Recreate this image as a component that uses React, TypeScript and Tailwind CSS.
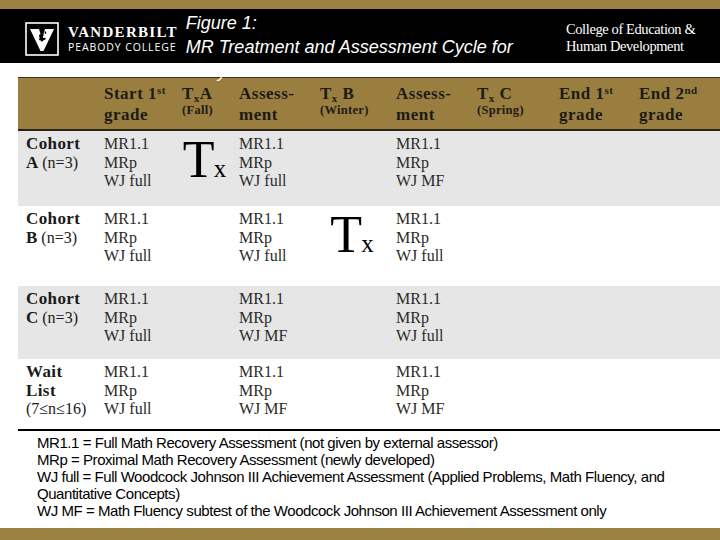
import React from 'react'

const serif = { fontFamily: '"Liberation Serif", "DejaVu Serif", serif' }
const sans = { fontFamily: '"Liberation Sans", Arial, sans-serif' }

const cols = 'grid grid-cols-[78px_78px_57px_81px_76px_81px_82px_80px_89px]'

function Tx() {
  return (
    <div className="flex h-full items-start justify-center pt-[3px] pl-[4px]">
      <span className="text-[52px] leading-none text-black" style={serif}>T</span>
      <span className="-ml-[1px] mt-[22px] text-[25px] leading-none text-black" style={serif}>x</span>
    </div>
  )
}

function Lines({ items }: { items: string[] }) {
  return (
    <div className="pl-2 pt-[4px] text-[16px] leading-[18.5px] text-[#2b2b2b]" style={serif}>
      {items.map((t, i) => (
        <div key={i}>{t}</div>
      ))}
    </div>
  )
}

function HeadCell({ top, bottom, small }: { top: React.ReactNode; bottom: string; small?: boolean }) {
  return (
    <div className="pl-2 pt-[6px] font-bold text-[#1c1a14]" style={serif}>
      <div className="text-[17px] leading-[19px] tracking-[0.5px] whitespace-nowrap">{top}</div>
      <div className={small ? 'text-[12.5px] leading-[15px] tracking-[0.3px] whitespace-nowrap' : 'mt-[2px] text-[17px] leading-[19px] tracking-[0.5px]'}>{bottom}</div>
    </div>
  )
}

function TxHead({ letter }: { letter: string }) {
  return (
    <>
      T<sub className="text-[11px] leading-none">x</sub>
      {letter === 'A' ? '' : ' '}{letter}
    </>
  )
}

const rows = [
  {
    sub: ['A', '(n=3)'],
    bg: 'bg-[#e6e6e6]',
    h: 'h-[75px]',
    c1: ['MR1.1', 'MRp', 'WJ full'],
    c3: ['MR1.1', 'MRp', 'WJ full'],
    c5: ['MR1.1', 'MRp', 'WJ MF'],
    tx: 2,
  },
  {
    sub: ['B', '(n=3)'],
    bg: 'bg-white',
    h: 'h-[80px]',
    c1: ['MR1.1', 'MRp', 'WJ full'],
    c3: ['MR1.1', 'MRp', 'WJ full'],
    c5: ['MR1.1', 'MRp', 'WJ full'],
    tx: 4,
  },
  {
    sub: ['C', '(n=3)'],
    bg: 'bg-[#e6e6e6]',
    h: 'h-[73px]',
    c1: ['MR1.1', 'MRp', 'WJ full'],
    c3: ['MR1.1', 'MRp', 'WJ MF'],
    c5: ['MR1.1', 'MRp', 'WJ full'],
    tx: 0,
  },
]

export default function App() {
  return (
    <div className="relative h-[540px] w-[720px] overflow-hidden bg-white">
      {/* top band */}
      <div className="h-[9px] bg-[#9a8141]" />
      <div className="relative flex h-[54px] items-start bg-black">
        {/* logo */}
        <div className="ml-[25px] mt-[13px] flex items-center">
          <svg width="34" height="34" viewBox="0 0 34 34">
            <rect x="1" y="1" width="32" height="32" fill="black" stroke="white" strokeWidth="1.6" />
            <path d="M5 7 L14 7 L17 17 L20 7 L29 7 L18.5 29 L15.5 29 Z" fill="white" />
            <path d="M14 13 q3 -2 5 0 q-2 1 -1 3 q2 -1 3 1 q-3 1 -4 3 q-1 -2 -3 -2 q1 -2 0 -5 Z" fill="black" />
            <path d="M20 9 q2 1 1 3 q-2 0 -1 -3 Z" fill="black" />
          </svg>
          <div className="ml-[9px] text-white">
            <div className="text-[15px] font-bold leading-[16px] tracking-[1.3px]" style={serif}>VANDERBILT</div>
            <div className="mt-[1px] text-[10.5px] leading-[13px] tracking-[0.9px]" style={{ fontFamily: '"Open Sans", "DejaVu Sans", sans-serif' }}>PEABODY COLLEGE</div>
          </div>
        </div>
        {/* title */}
        <div className="ml-[8px] mt-[2px] text-[18px] italic leading-[24px] text-white" style={sans}>
          <div>Figure 1:</div>
          <div>MR Treatment and Assessment Cycle for</div>
          <div>Early School Intervention</div>
        </div>
        <div className="absolute left-[566px] top-[12px] text-[14.5px] leading-[17px] tracking-[-0.4px] text-white" style={serif}>
          <div>College of Education &amp;</div>
          <div>Human Development</div>
        </div>
      </div>
      <div className="relative h-[14px] bg-white" />

      {/* table */}
      <div className="ml-[18px] w-[702px]">
        <div className={`${cols} h-[54px] border-t border-b-2 border-t-[#3a3020] border-b-[#2a2418] bg-[#9a7e40]`}>
          <div />
          <HeadCell top={<>Start 1<sup className="text-[11px]">st</sup></>} bottom="grade" />
          <HeadCell top={<TxHead letter="A" />} bottom="(Fall)" small />
          <HeadCell top="Assess-" bottom="ment" />
          <HeadCell top={<TxHead letter="B" />} bottom="(Winter)" small />
          <HeadCell top="Assess-" bottom="ment" />
          <HeadCell top={<TxHead letter="C" />} bottom="(Spring)" small />
          <HeadCell top={<>End 1<sup className="text-[11px]">st</sup></>} bottom="grade" />
          <HeadCell top={<>End 2<sup className="text-[11px]">nd</sup></>} bottom="grade" />
        </div>

        {rows.map((r, i) => (
          <div key={i} className={`${cols} ${r.h} ${r.bg}`}>
            <div className="pl-2 pt-[4px] text-[16px] leading-[18.5px] text-[#1a1a1a]" style={serif}>
              <div className="text-[17px] font-bold tracking-[0.4px]">Cohort</div>
              <div className="whitespace-nowrap">
                <span className="text-[17px] font-bold">{r.sub[0]}</span> {r.sub[1]}
              </div>
            </div>
            <Lines items={r.c1} />
            <div>{r.tx === 2 && <Tx />}</div>
            <Lines items={r.c3} />
            <div>{r.tx === 4 && <Tx />}</div>
            <Lines items={r.c5} />
            <div />
            <div />
            <div />
          </div>
        ))}

        <div className={`${cols} h-[72px] border-b-2 border-b-black bg-white`}>
          <div className="pl-2 pt-[4px] text-[16px] leading-[18.5px] text-[#1a1a1a]" style={serif}>
            <div className="text-[17px] font-bold tracking-[0.4px]">Wait</div>
            <div className="text-[17px] font-bold tracking-[0.4px]">List</div>
            <div className="whitespace-nowrap">(7≤n≤16)</div>
          </div>
          <Lines items={['MR1.1', 'MRp', 'WJ full']} />
          <div />
          <Lines items={['MR1.1', 'MRp', 'WJ MF']} />
          <div />
          <Lines items={['MR1.1', 'MRp', 'WJ MF']} />
          <div />
          <div />
          <div />
        </div>
      </div>

      {/* legend */}
      <div className="ml-[37px] mt-[3px] w-[680px] text-[15px] leading-[17px] tracking-[-0.45px] text-black" style={sans}>
        <div>MR1.1 = Full Math Recovery Assessment (not given by external assessor)</div>
        <div>MRp = Proximal Math Recovery Assessment (newly developed)</div>
        <div>WJ full = Full Woodcock Johnson III Achievement Assessment (Applied Problems, Math Fluency, and</div>
        <div>Quantitative Concepts)</div>
        <div>WJ MF = Math Fluency subtest of the Woodcock Johnson III Achievement Assessment only</div>
      </div>

      <div className="absolute bottom-0 left-0 h-[12px] w-[720px] bg-[#9a8141]" />
    </div>
  )
}
